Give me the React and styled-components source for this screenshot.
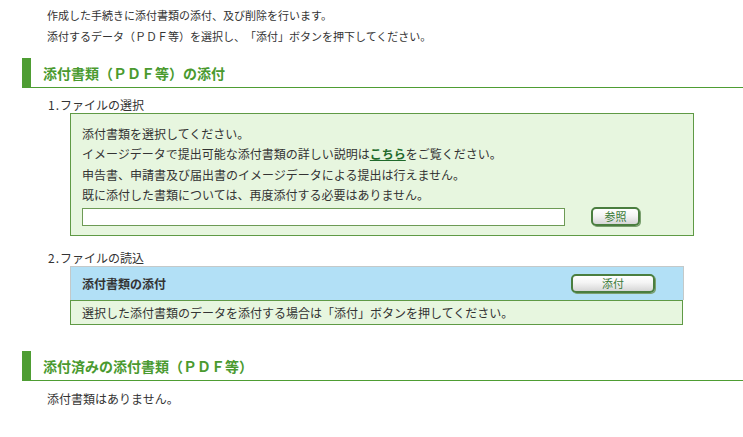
import React from "react";
import styled, { createGlobalStyle } from "styled-components";

const Global = createGlobalStyle`
  html, body { margin: 0; padding: 0; background: #fff; }
  body {
    font-family: "Noto Sans CJK JP", "Noto Sans", sans-serif;
    color: #333;
    text-spacing-trim: space-all;
    -webkit-font-smoothing: antialiased;
  }
`;

const Page = styled.div`
  width: 743px;
  padding-top: 5px;
`;

const Intro = styled.p`
  margin: 0 0 0 47px;
  font-size: 11px;
  line-height: 21px;
  color: #333;
`;

const Heading = styled.h2`
  margin: ${(p) => p.$top}px 0 0 22px;
  height: 29px;
  border-left: 9px solid #4e9d33;
  border-bottom: 1px solid #4e9d33;
  padding-left: 12px;
  font-size: 14px;
  font-weight: bold;
  color: #4a9a2f;
  line-height: 30px;
`;

const StepLabel = styled.div`
  margin: ${(p) => p.$top}px 0 0 48px;
  font-size: 12px;
  line-height: 16px;
  color: #333;
`;

const Num = styled.span`
  letter-spacing: 1px;
`;

const GreenBox = styled.div`
  margin-left: 70px;
  width: 611px;
  background: #e7f6df;
  border: 1px solid #5f9a45;
  padding: 10px 0 9px 11px;
`;

const BoxLine = styled.div`
  font-size: 12px;
  line-height: 20.3px;
  color: #333;
`;

const Link = styled.a`
  color: #1f6a2c;
  font-weight: bold;
  text-decoration: underline;
`;

const InputRow = styled.div`
  display: flex;
  align-items: center;
  gap: 26px;
  margin-top: 2px;
`;

const FileInput = styled.div`
  width: 481px;
  height: 16px;
  background: #fff;
  border: 1px solid #6d9a55;
`;

const Btn = styled.button`
  width: ${(p) => p.$w}px;
  height: 19px;
  padding: 0;
  border: 2px solid #4a7e3f;
  border-radius: 5px;
  background: linear-gradient(#ffffff 0%, #f4f4f4 45%, #d6d6d6 100%);
  box-shadow: 1px 1px 0 #7b9f70;
  font-family: "Noto Sans CJK JP", sans-serif;
  font-size: 11px;
  line-height: 15px;
  color: #3a7a35;
  cursor: pointer;
`;

const Table = styled.div`
  margin-left: 70px;
  width: 613px;
`;

const BlueHead = styled.div`
  display: flex;
  align-items: center;
  justify-content: space-between;
  height: 33px;
  background: #b2e0f6;
  border: 1px solid #c4c9c9;
  border-bottom: none;
  padding: 0 28px 0 11px;
  font-size: 12px;
  font-weight: bold;
  color: #333;
  box-sizing: content-box;
  width: 573px;
`;

const GreenRow = styled.div`
  height: 23px;
  background: #e7f6df;
  border: 1px solid #5f9a45;
  padding-left: 11px;
  font-size: 12px;
  line-height: 23px;
  color: #333;
`;

const Body = styled.p`
  margin: 10px 0 0 47px;
  font-size: 12px;
  line-height: 16px;
  color: #333;
`;

export default function App() {
  return (
    <Page>
      <Global />
      <Intro>
        作成した手続きに添付書類の添付、及び削除を行います。
        <br />
        添付するデータ（ＰＤＦ等）を選択し、「添付」ボタンを押下してください。
      </Intro>

      <Heading $top={11}>添付書類（ＰＤＦ等）の添付</Heading>

      <StepLabel $top={9}>
        <Num>1.</Num>ファイルの選択
      </StepLabel>
      <GreenBox>
        <BoxLine>添付書類を選択してください。</BoxLine>
        <BoxLine>
          イメージデータで提出可能な添付書類の詳しい説明は<Link>こちら</Link>をご覧ください。
        </BoxLine>
        <BoxLine>申告書、申請書及び届出書のイメージデータによる提出は行えません。</BoxLine>
        <BoxLine>既に添付した書類については、再度添付する必要はありません。</BoxLine>
        <InputRow>
          <FileInput />
          <Btn $w={49}>参照</Btn>
        </InputRow>
      </GreenBox>

      <StepLabel $top={14}>
        <Num>2.</Num>ファイルの読込
      </StepLabel>
      <Table>
        <BlueHead>
          <span>添付書類の添付</span>
          <Btn $w={84}>添付</Btn>
        </BlueHead>
        <GreenRow>選択した添付書類のデータを添付する場合は「添付」ボタンを押してください。</GreenRow>
      </Table>

      <Heading $top={26}>添付済みの添付書類（ＰＤＦ等）</Heading>
      <Body>添付書類はありません。</Body>
    </Page>
  );
}
